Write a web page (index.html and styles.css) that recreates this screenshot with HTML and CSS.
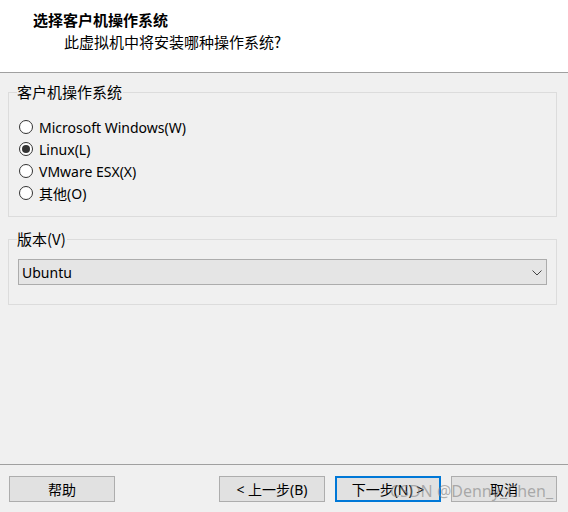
FILE: index.html
```html
<!DOCTYPE html>
<html lang="zh-CN">
<head>
<meta charset="utf-8">
<title>选择客户机操作系统</title>
<link rel="stylesheet" href="styles.css">
</head>
<body>
<div class="window">
  <header class="header">
    <div class="title">选择客户机操作系统</div>
    <div class="subtitle">此虚拟机中将安装哪种操作系统?</div>
  </header>
  <main class="content">
    <fieldset class="group group-os">
      <legend class="legend">客户机操作系统</legend>
      <div class="radio-list">
        <label class="radio-row"><span class="radio"></span><span>Microsoft Windows(W)</span></label>
        <label class="radio-row"><span class="radio checked"></span><span>Linux(L)</span></label>
        <label class="radio-row"><span class="radio"></span><span>VMware ESX(X)</span></label>
        <label class="radio-row"><span class="radio"></span><span>其他(O)</span></label>
      </div>
    </fieldset>
    <fieldset class="group group-ver">
      <legend class="legend">版本(V)</legend>
      <div class="select">
        <span class="select-value">Ubuntu</span>
        <svg class="chevron" width="10" height="6" viewBox="0 0 10 6"><path d="M0.5 0.5 L5 5 L9.5 0.5" fill="none" stroke="#444" stroke-width="1"/></svg>
      </div>
    </fieldset>
  </main>
  <footer class="footer">
    <button class="btn">帮助</button>
    <div class="spacer"></div>
    <button class="btn">&lt; 上一步(B)</button>
    <button class="btn btn-default">下一步(N) &gt;</button>
    <button class="btn">取消</button>
    <div class="watermark">CSDN @Denny_Chen_</div>
  </footer>
</div>
</body>
</html>
```
FILE: styles.css
```css
* { box-sizing: border-box; }
html, body { margin: 0; padding: 0; }
body {
  width: 568px;
  height: 512px;
  background: #f0f0f0;
  font-family: "Noto Sans", "Noto Sans CJK SC", sans-serif;
  font-size: 14px;
  color: #000;
  overflow: hidden;
}
.window {
  height: 512px;
  display: flex;
  flex-direction: column;
}
.header {
  height: 73px;
  background: #fff;
  border-bottom: 1px solid #a0a0a0;
  padding-top: 10px;
}
.title {
  font-family: "Noto Sans CJK SC", sans-serif;
  font-weight: bold;
  font-size: 15px;
  line-height: 20px;
  margin-left: 33px;
}
.subtitle {
  font-family: "Noto Sans CJK SC", sans-serif;
  font-size: 15px;
  line-height: 20px;
  margin-top: 2px;
  margin-left: 64px;
}
.content {
  flex: 1;
  padding: 10px 11px 0 8px;
}
.group {
  margin: 0;
  border: 1px solid #dcdcdc;
  padding: 0 9px 0 9px;
}
.legend {
  font-family: "Noto Sans CJK SC", sans-serif;
  font-size: 15px;
  line-height: 18px;
  padding: 0 1px 0 0;
  margin-left: -1px;
}
.group-os { padding-top: 15px; padding-bottom: 12px; }
.group-ver { margin-top: 13px; padding-top: 11px; padding-bottom: 19px; }
.radio-list { display: flex; flex-direction: column; }
.radio-row {
  display: flex;
  align-items: center;
  height: 22px;
  gap: 6px;
  font-size: 14px;
}
.radio {
  width: 14px;
  height: 14px;
  border: 1px solid #333;
  border-radius: 50%;
  background: #fff;
  display: flex;
  align-items: center;
  justify-content: center;
  margin-left: 1px;
}
.radio.checked::after {
  content: "";
  width: 8px;
  height: 8px;
  border-radius: 50%;
  background: #333;
}
.select {
  height: 26px;
  border: 1px solid #acacac;
  background: #e5e5e5;
  display: flex;
  align-items: center;
  justify-content: space-between;
  padding: 0 4px 0 3px;
  font-size: 14px;
}
.chevron { margin-top: 1px; }
.footer {
  position: relative;
  height: 48px;
  border-top: 1px solid #a0a0a0;
  padding: 11px 11px 0 9px;
  display: flex;
  align-items: flex-start;
  gap: 10px;
}
.spacer { flex: 1; }
.btn {
  width: 106px;
  height: 26px;
  background: #e1e1e1;
  border: 1px solid #adadad;
  font-family: "Noto Sans", "Noto Sans CJK SC", sans-serif;
  font-size: 14px;
  color: #000;
  padding: 0;
}
.btn-default { border: 2px solid #0078d7; }
.watermark {
  position: absolute;
  left: 390px;
  top: 15px;
  font-family: "Noto Sans", sans-serif;
  font-size: 16px;
  line-height: 22px;
  color: rgba(130, 130, 130, 0.6);
  white-space: nowrap;
  pointer-events: none;
}
```
